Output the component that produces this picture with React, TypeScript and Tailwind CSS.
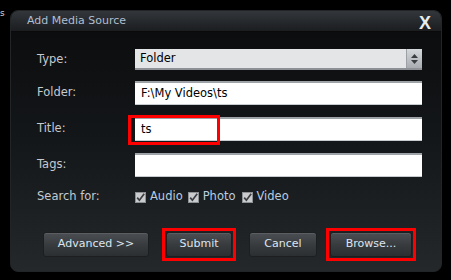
import React from 'react';

const font = { fontFamily: '"DejaVu Sans", Verdana, sans-serif' };

function Check() {
  return (
    <svg width="11" height="11" viewBox="0 0 11 11" className="shrink-0">
      <rect x="0.5" y="0.5" width="10" height="10" fill="#c9cbcd" stroke="#8e9194" />
      <path d="M2.2 5.6 L4.4 8.2 L9.2 1.8" fill="none" stroke="#3c3f42" strokeWidth="1.7" />
    </svg>
  );
}

function Btn({ label, w }: { label: string; w: string }) {
  return (
    <div
      className={`${w} h-[25px] rounded-[3px] flex items-center justify-center text-[11px] text-[#dce6f0] bg-gradient-to-b from-[#4b4f53] via-[#393c3f] to-[#2c2f31] border border-[#1c1e20] shadow-[inset_0_1px_0_#5a5e62]`}
    >
      {label}
    </div>
  );
}

function Field({ value }: { value?: string }) {
  return (
    <div className="w-[287px] h-[24px] bg-white border-t-2 border-t-[#9ea3a8] border-b border-b-[#c8ccd0] flex items-center pl-[6px] text-[11.5px] text-black">
      {value}
    </div>
  );
}

export default function App() {
  return (
    <div className="relative w-[451px] h-[280px] bg-black overflow-hidden pl-[10px] pt-[10px]" style={font}>
      <span className="absolute left-0 top-[9px] text-[9px] leading-none text-[#d8d8d8]">s</span>

      <div className="w-[432px] h-[262px] rounded-[8px] border border-[#222527] overflow-hidden flex flex-col bg-gradient-to-b from-[#0a0b0c] via-[#14171a] to-[#24282b]">
        {/* title bar */}
        <div className="h-[21px] flex items-center justify-between pl-[16px] pr-[10px] bg-gradient-to-b from-[#33373b] to-[#1b1d20] border-b border-b-[#0a0a0b]">
          <span className="text-[11px] text-[#aebfd0] pt-[1px]">Add Media Source</span>
          <span className="text-[18px] font-bold leading-none text-[#e8ecef] mt-[4px]" style={{ fontFamily: '"Liberation Sans", Arial, sans-serif' }}>X</span>
        </div>

        <div className="pl-[26px] text-[11.5px] text-[#c5cacf]">
          {/* Type */}
          <div className="flex items-center mt-[17px] h-[21px]">
            <span className="w-[98px]">Type:</span>
            <div className="w-[287px] h-[21px] flex bg-[#e3e5e7] border-b-2 border-b-[#8d9196]">
              <div className="flex-1 flex items-center pl-[5px] text-black">Folder</div>
              <div className="w-[16px] h-full flex flex-col items-center justify-center gap-[2px] bg-gradient-to-b from-[#d5d8db] to-[#a9adb1] border-l border-l-[#9ca0a4]">
                <svg width="7" height="4" viewBox="0 0 7 4"><path d="M0 4 L3.5 0 L7 4Z" fill="#3a3d40" /></svg>
                <svg width="7" height="4" viewBox="0 0 7 4"><path d="M0 0 L3.5 4 L7 0Z" fill="#3a3d40" /></svg>
              </div>
            </div>
          </div>

          {/* Folder */}
          <div className="flex items-center mt-[11px]">
            <span className="w-[98px]">Folder:</span>
            <Field value="F:\My Videos\ts" />
          </div>

          {/* Title */}
          <div className="relative flex items-center mt-[12px]">
            <span className="w-[98px]">Title:</span>
            <Field value="ts" />
            <div className="absolute left-[91px] top-[-2px] w-[92px] h-[30px] border-[3px] border-[#ff0000]" />
          </div>

          {/* Tags */}
          <div className="flex items-center mt-[12px]">
            <span className="w-[98px]">Tags:</span>
            <Field />
          </div>

          {/* Search for */}
          <div className="flex items-center mt-[9px] h-[22px]">
            <span className="w-[98px]">Search for:</span>
            <div className="flex items-center gap-[4px] text-[#b8cde0]">
              <Check />
              <span>Audio</span>
              <span className="ml-[1px]"><Check /></span>
              <span>Photo</span>
              <span className="ml-[2px]"><Check /></span>
              <span>Video</span>
            </div>
          </div>
        </div>

        {/* buttons */}
        <div className="flex items-center pl-[32px] mt-[20px]">
          <Btn label="Advanced >>" w="w-[106px]" />
          <div className="ml-[13px] p-[1px] border-[3px] border-[#ff0000]">
            <Btn label="Submit" w="w-[66px]" />
          </div>
          <div className="ml-[13px]">
            <Btn label="Cancel" w="w-[68px]" />
          </div>
          <div className="ml-[9px] p-[1px] border-[3px] border-[#ff0000]">
            <Btn label="Browse..." w="w-[82px]" />
          </div>
        </div>
      </div>
    </div>
  );
}
